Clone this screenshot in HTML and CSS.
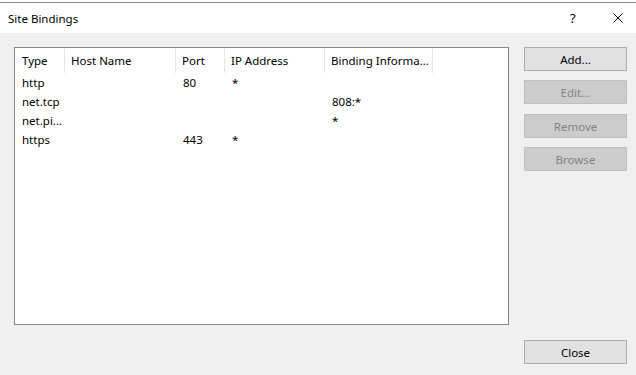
FILE: index.html
```html
<!DOCTYPE html>
<html lang="en">
<head>
<meta charset="UTF-8">
<title>Site Bindings</title>
<link rel="stylesheet" href="styles.css">
</head>
<body>
<div class="window">
  <div class="titlebar">
    <span class="title">Site Bindings</span>
    <span class="help">?</span>
    <span class="close-x">
      <svg width="10" height="10" viewBox="0 0 10 10"><path d="M0.5 0.5 L9.5 9.5 M9.5 0.5 L0.5 9.5" stroke="#000" stroke-width="1" fill="none"/></svg>
    </span>
  </div>

  <div class="content">
    <div class="main">
      <div class="list">
        <div class="row head">
          <div class="c c-type">Type</div>
          <div class="c c-host">Host Name</div>
          <div class="c c-port">Port</div>
          <div class="c c-ip">IP Address</div>
          <div class="c c-info">Binding Informa...</div>
        </div>
        <div class="row">
          <div class="c c-type">http</div><div class="c c-host"></div><div class="c c-port">80</div><div class="c c-ip">*</div><div class="c c-info"></div>
        </div>
        <div class="row">
          <div class="c c-type">net.tcp</div><div class="c c-host"></div><div class="c c-port"></div><div class="c c-ip"></div><div class="c c-info">808:*</div>
        </div>
        <div class="row">
          <div class="c c-type">net.pi...</div><div class="c c-host"></div><div class="c c-port"></div><div class="c c-ip"></div><div class="c c-info">*</div>
        </div>
        <div class="row">
          <div class="c c-type">https</div><div class="c c-host"></div><div class="c c-port">443</div><div class="c c-ip">*</div><div class="c c-info"></div>
        </div>
      </div>

      <div class="actions">
        <button class="btn">Add...</button>
        <button class="btn" disabled>Edit...</button>
        <button class="btn gap-wide" disabled>Remove</button>
        <button class="btn" disabled>Browse</button>
      </div>
    </div>

    <div class="footer">
      <button class="btn">Close</button>
    </div>
  </div>
</div>
</body>
</html>
```

FILE: styles.css
```css
* { box-sizing: border-box; margin: 0; padding: 0; }
html, body { height: 100%; }
body { font-family: 'Noto Sans', 'Open Sans', sans-serif; font-size: 11.5px; color: #000; background: #fff; }

.window { height: 100%; padding-top: 2px; display: flex; flex-direction: column; }

.titlebar { height: 31px; border-top: 1px solid #8a8a8a; background: #fff; display: flex; align-items: center; padding-left: 8px; }
.title { flex: 1; font-size: 11.5px; }
.help { width: 10px; font-size: 13px; margin-right: 33px; }
.close-x { width: 10px; height: 10px; display: flex; margin-right: 13px; }

.content { flex: 1; background: #f0f0f0; padding: 14px 9px 11px 14px; display: flex; flex-direction: column; }
.main { flex: 1; display: flex; gap: 15px; }

.list { width: 495px; height: 278px; background: #fff; border: 1px solid #828790; }
.row { display: flex; height: 19px; align-items: center; }
.row.head { height: 25px; margin-bottom: 0; }
.c { padding-left: 7px; white-space: nowrap; overflow: hidden; height: 100%; display: flex; align-items: center; }
.head .c { border-right: 1px solid #e5e5e5; padding-left: 6px; }
.head .c-type { padding-left: 7px; }
.c-type { width: 50px; }
.c-host { width: 111px; }
.c-port { width: 49px; }
.c-ip { width: 100px; }
.c-info { width: 108px; }

.actions { width: 103px; display: flex; flex-direction: column; gap: 9px; }
.btn { width: 103px; height: 24px; background: #e1e1e1; border: 1px solid #adadad; font-family: inherit; font-size: 11.5px; color: #000; }
.btn:disabled { background: #cccccc; border-color: #bfbfbf; color: #838383; }
.gap-wide { margin-top: 1px; }

.footer { display: flex; justify-content: flex-end; }
```
